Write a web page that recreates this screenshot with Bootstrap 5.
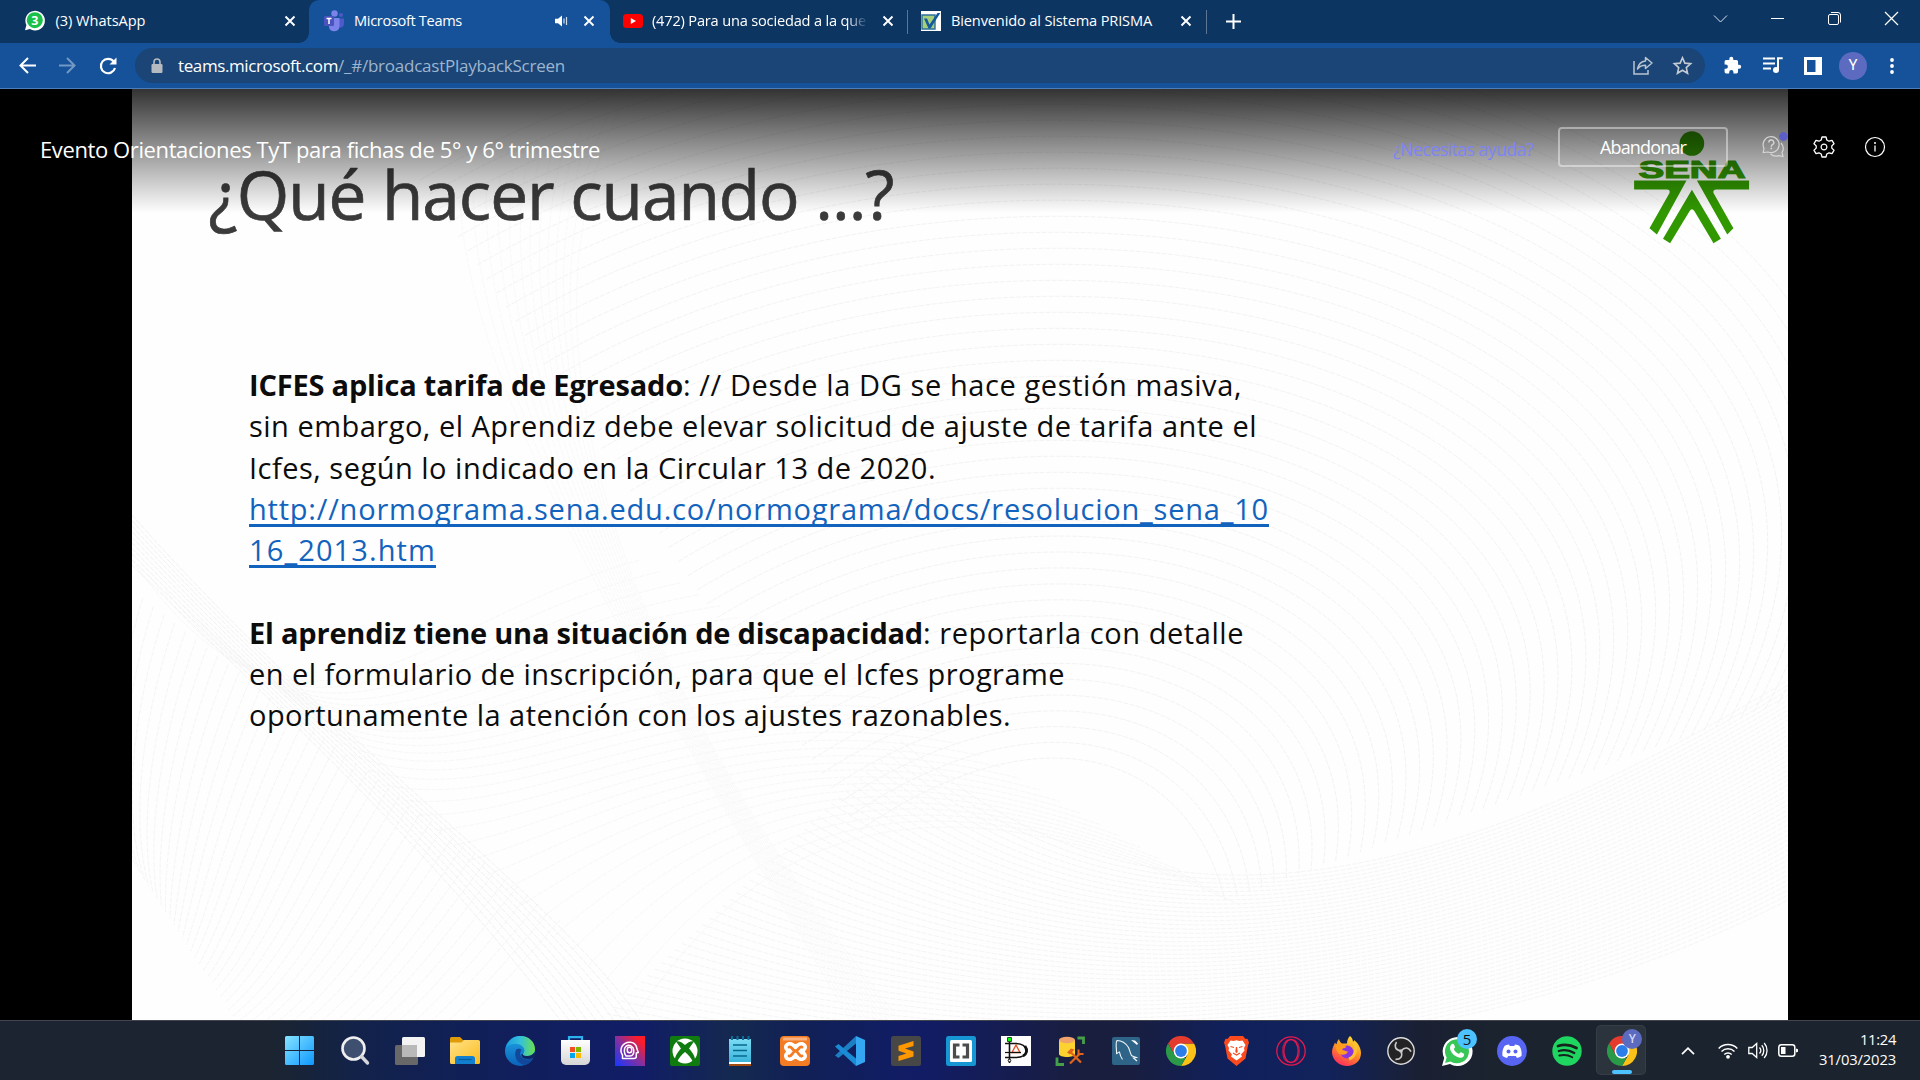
<!DOCTYPE html>
<html lang="es">
<head>
<meta charset="utf-8">
<title>Microsoft Teams</title>
<link href="https://cdn.jsdelivr.net/npm/bootstrap@5.3.0/dist/css/bootstrap.min.css" rel="stylesheet">
<style>
html,body{height:100%;overflow:hidden}
body{width:1920px;height:1080px;background:#000;font-family:"Open Sans","Noto Sans",sans-serif;color:#fff}
svg{display:block;flex:none;overflow:visible}
.fit{white-space:nowrap;display:inline-block}
.tabstrip{height:43px;background:#0c3562;font-size:14.6px;line-height:20px}
.btab{height:43px;padding-left:24px;padding-bottom:2px}
.btab .fit{margin-left:10.5px;margin-top:-2px}
.btab.current{background:#155299;border-radius:10px 10px 0 0;padding-left:15px;width:301px;position:relative}
.btab.current::before,.btab.current::after{content:"";position:absolute;bottom:0;width:10px;height:10px}
.btab.current::before{left:-10px;background:radial-gradient(circle at 0 0,transparent 9.5px,#155299 10px)}
.btab.current::after{right:-10px;background:radial-gradient(circle at 100% 0,transparent 9.5px,#155299 10px)}
.fade-title{width:216px;overflow:hidden;margin-top:-2px;-webkit-mask-image:linear-gradient(90deg,#000 90%,transparent 100%)}
.sep{width:1px;height:24px;background:#5c7796}
.toolbar{height:46px;background:#155299;border-bottom:1px solid #4c7ebb}
.omnibox{width:1570px;height:35px;border-radius:18px;background:#1a4576;font-size:17px;line-height:34px;padding:0 13px 0 14px}
.dim{color:#9fb5cf}
.avatar{width:28px;height:28px;background:#5c6bc0;font-family:Roboto,sans-serif;font-size:15px}
.stage{height:931px;background:#000}
.slide{width:1656px;height:931px;background:#fefefe;color:#0c0c0c}
.slide-art{top:0;left:0}
.slide-body{padding:65px 39.4px 0 76.5px}
.slide-title{font-size:67.5px;line-height:80px;color:#3b3b3b;margin:0;-webkit-text-stroke:.7px #3b3b3b}
.slide-copy{font-size:29px;line-height:41.3px;padding:121px 0 0 40.5px}
.slide-copy a{color:#1263bd;text-decoration:underline 2.5px;text-underline-offset:4px;text-decoration-skip-ink:none}
.copy-line{height:41.3px}
.overlay{top:0;left:0;right:0;height:124px;background:linear-gradient(rgba(0,0,0,.8),rgba(0,0,0,0))}
.overlay-row{padding:37px 34px 0 40px;height:79px}
.event-title{font-size:22px;line-height:42px;padding-top:4px}
.help{color:#7f85f5;font-size:18px}
.leave{width:170px;height:40px;border:2px solid rgba(255,255,255,.42);border-radius:4px;color:#fff;font-size:18px;line-height:24px;font-weight:500}
.taskbar{height:60px;border-top:1px solid #42454e;background:linear-gradient(90deg,#1b2430 0,#1b2430 270px,#12224a 360px,#111f58 470px,#111d66 640px,#14294f 735px,#112056 800px,#111c66 920px,#191e3e 1080px,#191e3f 1130px,#10205c 1230px,#12225a 1330px,#1a2033 1420px,#1b232e 1500px)}
.apps{margin-left:272px}
.app{width:55.1px;height:59px;position:relative}
.app.open::before{content:"";position:absolute;left:2px;top:4px;width:50px;height:50px;border-radius:5px;background:rgba(255,255,255,.075);border:1px solid rgba(255,255,255,.05)}
.app.open::after{content:"";position:absolute;left:17.5px;top:49px;width:20px;height:4px;border-radius:2px;background:#4cc2ff}
.app svg{position:relative}
.bubble{position:absolute;left:28px;top:8px;width:20px;height:20px;border-radius:50%;background:#4cc2ff;color:#111;font-size:15px;line-height:20px;text-align:center}
.bubble.who{background:#5c6bc0;color:#d5d9f5;font-size:12px;font-weight:600}
.clock{font-size:14.8px;line-height:20px;text-align:right;margin-top:-3px}
</style>
<script src="https://cdn.jsdelivr.net/npm/bootstrap@5.3.0/dist/js/bootstrap.bundle.min.js"></script>
</head>
<body class="d-flex flex-column">

<svg width="0" height="0" class="position-absolute">
<defs>
<symbol id="x" viewBox="0 0 12 12"><path d="M1.5 1.5l9 9M10.5 1.5l-9 9" stroke="#fff" stroke-width="1.9" fill="none"/></symbol>
<linearGradient id="gwin" x1="0" y1="0" x2="1" y2="1"><stop offset="0" stop-color="#86e3ff"/><stop offset="1" stop-color="#0d98ff"/></linearGradient>
<linearGradient id="gfold" x1="0" y1="0" x2="1" y2="1"><stop offset="0" stop-color="#ffe28a"/><stop offset="1" stop-color="#fbbc1c"/></linearGradient>
<linearGradient id="gedge" x1="0" y1="0" x2="1" y2="0"><stop offset="0" stop-color="#1b9de2"/><stop offset=".5" stop-color="#35c1d9"/><stop offset="1" stop-color="#6be04b"/></linearGradient>
<linearGradient id="gedge2" x1="0" y1="0" x2="0" y2="1"><stop offset="0" stop-color="#1fa3e6"/><stop offset="1" stop-color="#0b62b8"/></linearGradient>
<linearGradient id="gid" x1="0" y1="1" x2="1" y2="0"><stop offset="0" stop-color="#1438ff"/><stop offset=".5" stop-color="#8a2f9c"/><stop offset=".85" stop-color="#ff1c2a"/></linearGradient>
<linearGradient id="gfire" x1=".8" y1="0" x2=".3" y2="1"><stop offset="0" stop-color="#ffe43a"/><stop offset=".45" stop-color="#ff9a1f"/><stop offset="1" stop-color="#ff2a5f"/></linearGradient>
<linearGradient id="gshadow" x1="0" y1="0" x2="0" y2="1"><stop offset="0" stop-color="#fff"/><stop offset="1" stop-color="#d5d5d5"/></linearGradient>
<linearGradient id="gnote" x1="0" y1="0" x2="0" y2="1"><stop offset="0" stop-color="#7bdcf3"/><stop offset="1" stop-color="#3cb4dc"/></linearGradient>
<symbol id="chrome" viewBox="0 0 30 30"><path d="M28 7.500A15 15 0 0 1 15 30L21.500 18.700L15 7.500Z" fill="#fbc116"/><path d="M2 7.500A15 15 0 0 1 28 7.500H15L8.500 18.700Z" fill="#e33b2e"/><path d="M2 7.500L8.500 18.750L15 22H19.600L15 30A15 15 0 0 1 2 7.500Z" fill="#2a9a48"/><circle cx="15" cy="15" r="7.400" fill="#fff"/><circle cx="15" cy="15" r="5.900" fill="#2b7de9"/></symbol>
</defs>
</svg>

<header class="tabstrip d-flex align-items-center">
  <div class="btab d-flex align-items-center" style="width:309px">
    <svg width="21" height="21" viewBox="0 0 21 21"><path d="M1 20.300l1.400-5.200A9.800 9.800 0 1 1 6 19z" fill="#fff"/><circle cx="10.800" cy="10.200" r="8" fill="#19c14a"/><text x="10.800" y="14.600" font-size="12.500" font-weight="700" fill="#fff" text-anchor="middle">3</text></svg>
    <span class="fit" data-w="90">(3) WhatsApp</span>
    <svg class="ms-auto" width="12" height="12" style="margin-right:13px"><use href="#x"/></svg>
  </div>
  <div class="btab current d-flex align-items-center">
    <svg width="20" height="22" viewBox="0 0 20 22"><circle cx="10.500" cy="3.500" r="3.200" fill="#7b83eb"/><circle cx="17" cy="5" r="2" fill="#5059c9"/><path d="M14 8.500h6v6a3.500 3.500 0 0 1-6 2z" fill="#5059c9"/><path d="M5 8h10.500v8a5.300 5.300 0 0 1-10.500 1z" fill="#7b83eb"/><rect x="0" y="6" width="10" height="10" rx="1" fill="#4b53bc"/><path d="M2.500 8.600h5M5 8.600v5.400" stroke="#fff" stroke-width="1.500"/></svg>
    <span class="fit" data-w="108" style="margin-left:10px">Microsoft Teams</span>
    <svg class="ms-auto" width="13" height="12" viewBox="0 0 13 12"><path d="M0 3.800h3l4-3.300v11L3 8.200H0z" fill="#fff"/><path d="M9 3.500v5M11.500 2v8" stroke="#cfdcec" stroke-width="1.200"/></svg>
    <svg width="12" height="12" style="margin:0 15px"><use href="#x"/></svg>
  </div>
  <div class="btab d-flex align-items-center" style="width:296.5px;padding-left:13px">
    <svg width="20" height="14" viewBox="0 0 20 14"><rect width="20" height="14" rx="3.500" fill="#f00"/><path d="M7.800 4l5.200 3-5.200 3z" fill="#fff"/></svg>
    <span class="fade-title" style="margin-left:9px"><span class="fit m-0" data-w="214">(472) Para una sociedad a la que</span></span>
    <svg class="ms-auto" width="12" height="12" style="margin-right:13px"><use href="#x"/></svg>
  </div>
  <div class="sep"></div>
  <div class="btab d-flex align-items-center" style="width:298px;padding-left:13px">
    <svg width="20" height="20" viewBox="0 0 20 20"><path d="M0 0h20v20H0z" fill="#fff"/><path d="M1 4h13v14H1z" fill="#a6cf7b" stroke="#2f6f9c" stroke-width="1.400"/><path d="M3 7.500h3l2.500 6L16.500 2h2.800L9.500 17.500H7.500z" fill="#145a9c"/></svg>
    <span class="fit" data-w="201">Bienvenido al Sistema PRISMA</span>
    <svg class="ms-auto" width="12" height="12" style="margin-right:13.500px"><use href="#x"/></svg>
  </div>
  <div class="sep"></div>
  <svg width="15" height="15" viewBox="0 0 15 15" style="margin-left:19.500px"><path d="M7.500 0v15M0 7.500h15" stroke="#fff" stroke-width="2"/></svg>
  <div class="ms-auto d-flex align-items-center" style="padding:0 22.500px 6px 0;gap:44px">
    <svg width="13" height="13" viewBox="0 0 13 13"><path d="M0 3.500l6.500 6.500L13 3.500" fill="none" stroke="#dde5ee"/></svg>
    <svg width="13" height="13" viewBox="0 0 13 13"><path d="M0 6.500h13" stroke="#fff"/></svg>
    <svg width="13" height="13" viewBox="0 0 13 13"><g fill="none" stroke="#fff"><rect x=".5" y="2.500" width="10" height="10" rx="1.500"/><path d="M3 .5h7a2.500 2.500 0 0 1 2.500 2.500v7.500"/></g></svg>
    <svg width="13" height="13" viewBox="0 0 13 13"><path d="M0 0l13 13M13 0L0 13" stroke="#fff" stroke-width="1.200"/></svg>
  </div>
</header>

<nav class="toolbar d-flex align-items-center">
  <svg width="17" height="17" viewBox="0 0 17 17" style="margin-left:19px"><path d="M17 8.500H1.500M9 1L1.500 8.500 9 16" fill="none" stroke="#fff" stroke-width="2"/></svg>
  <svg width="17" height="17" viewBox="0 0 17 17" style="margin-left:23px"><path d="M0 8.500h15.500M8 1l7.500 7.500L8 16" fill="none" stroke="#7398c5" stroke-width="2"/></svg>
  <svg width="18" height="18" viewBox="0 0 18 18" style="margin-left:23px"><path d="M14.700 4.500A7.200 7.200 0 1 0 16 11" fill="none" stroke="#fff" stroke-width="2.200"/><path d="M17.500 .5v7h-7z" fill="#fff"/></svg>
  <div class="omnibox d-flex align-items-center" style="margin-left:18px">
    <svg width="16" height="16" viewBox="0 0 16 16"><rect x="2.500" y="6" width="11" height="9" rx="1.200" fill="#b5bac0"/><path d="M5 6V4a3 3 0 0 1 6 0v2" fill="none" stroke="#b5bac0" stroke-width="1.600"/></svg>
    <span class="fit" data-w="160" style="margin-left:13px">teams.microsoft.com</span><span class="fit dim" data-w="227">/_#/broadcastPlaybackScreen</span>
    <svg class="ms-auto" width="20" height="19" viewBox="0 0 20 19"><g fill="none" stroke="#b9c4d0" stroke-width="1.500"><path d="M1 5v13h14v-4"/><path d="M12.500 1.500L19 7l-6.500 5.500V9.300c-3.500 0-6 1-8 3.700.8-4.500 3.500-7.500 8-8z" stroke-linejoin="round"/></g></svg>
    <svg width="19" height="19" viewBox="0 0 20 20" style="margin:0 0 0 20px"><path d="M10 1.800l2.500 5.700 6.100.6-4.600 4.100 1.300 6L10 15l-5.300 3.200 1.300-6L1.400 8.100l6.100-.6z" fill="none" stroke="#c4cbd4" stroke-width="1.700"/></svg>
  </div>
  <svg width="19" height="19" viewBox="0 0 24 24" style="margin-left:18px"><path d="M20.500 11H19V7a2 2 0 0 0-2-2h-4V3.500a2.500 2.500 0 0 0-5 0V5H4a2 2 0 0 0-2 2v3.800h1.500a2.700 2.700 0 0 1 0 5.400H2V20a2 2 0 0 0 2 2h3.800v-1.500a2.700 2.700 0 0 1 5.400 0V22H17a2 2 0 0 0 2-2v-4h1.500a2.500 2.500 0 0 0 0-5z" fill="#fff"/></svg>
  <svg width="20" height="17" viewBox="0 0 20 17" style="margin-left:21px"><path d="M0 1.500h12M0 6.500h12M0 11.500h8" stroke="#fff" stroke-width="2"/><circle cx="13" cy="13" r="3" fill="#fff"/><path d="M15 13V1.300h4.700" fill="none" stroke="#fff" stroke-width="2"/></svg>
  <svg width="18" height="18" viewBox="0 0 18 18" style="margin-left:20.500px"><path d="M0 0h18v18H0zM3 3v12h8.500V3z" fill="#fff" fill-rule="evenodd"/></svg>
  <div class="avatar rounded-circle d-flex align-items-center justify-content-center" style="margin-left:17.500px">Y</div>
  <svg width="4" height="16" viewBox="0 0 4 16" style="margin-left:23px"><g fill="#fff"><circle cx="2" cy="2" r="1.900"/><circle cx="2" cy="8" r="1.900"/><circle cx="2" cy="14" r="1.900"/></g></svg>
</nav>

<main class="stage position-relative d-flex justify-content-center">
  <section class="slide position-relative overflow-hidden">
    <svg id="waves" class="slide-art position-absolute" width="1656" height="931" viewBox="132 89 1656 931" fill="none"></svg>
    <div class="slide-body position-relative">
      <div class="d-flex justify-content-between">
        <h1 class="slide-title"><span class="fit fw-normal" data-w="685">¿Qué hacer cuando ...?</span></h1>
        <svg width="115" height="112" viewBox="1633.500 130.500 115 112" style="margin-top:-23px">
          <g fill="#319800"><circle cx="1691.400" cy="143" r="12.300"/>
          <text x="1638" y="177" font-family="Liberation Sans,sans-serif" font-weight="700" font-size="24" textLength="107" lengthAdjust="spacingAndGlyphs" stroke="#319800" stroke-width="1.200">SENA</text>
          <path d="M1633.600 180H1686L1656.400 234 1649 227.700 1669 192.500Q1670 189 1666.400 189H1633.600z"/>
          <path d="M1748.600 180h-52.200l30.400 54 6.100-6.300L1713 192.500Q1712 189 1716 189h32.600z"/>
          <path d="M1691.400 189.300L1720.400 238.300 1713 242.700 1694 210.700Q1691.400 207 1689 210.700L1669.600 242.700 1662.500 238.300z"/></g>
        </svg>
      </div>
      <div class="slide-copy">
        <div class="copy-line"><b class="fit" data-w="434">ICFES aplica tarifa de Egresado</b><span class="fit" data-w="559">:&nbsp;// Desde la DG se hace gestión masiva,</span></div>
        <div class="copy-line"><span class="fit" data-w="1008">sin embargo, el Aprendiz debe elevar solicitud de ajuste de tarifa ante el</span></div>
        <div class="copy-line"><span class="fit" data-w="687">Icfes, según lo indicado en la Circular 13 de 2020.</span></div>
        <div class="copy-line"><a class="fit" data-w="1020">http://normograma.sena.edu.co/normograma/docs/resolucion_sena_10</a></div>
        <div class="copy-line"><a class="fit" data-w="187">16_2013.htm</a></div>
        <div class="copy-line"></div>
        <div class="copy-line"><b class="fit" data-w="674">El aprendiz tiene una situación de discapacidad</b><span class="fit" data-w="321">:&nbsp;reportarla con detalle</span></div>
        <div class="copy-line"><span class="fit" data-w="816">en el formulario de inscripción, para que el Icfes programe</span></div>
        <div class="copy-line"><span class="fit" data-w="762">oportunamente la atención con los ajustes razonables.</span></div>
      </div>
    </div>
  </section>

  <div class="overlay position-absolute">
    <div class="overlay-row d-flex align-items-center">
      <span class="event-title"><span class="fit" data-w="560">Evento Orientaciones TyT para fichas de 5° y 6° trimestre</span></span>
      <a class="help ms-auto text-decoration-none pt-1"><span class="fit" data-w="140">¿Necesitas ayuda?</span></a>
      <button class="leave btn p-0" style="margin-left:25px"><span class="fit" data-w="86">Abandonar</span></button>
      <svg width="24" height="24" viewBox="0 0 24 24" style="margin-left:34px"><g fill="none" stroke="#d5d5d5" stroke-width="1.200"><path d="M1.200 17.500l.8-4.200A8 8 0 1 1 6 17z"/><path d="M8.500 19a8 8 0 0 0 8.300 1.600l4.200.9-1-4A8 8 0 0 0 19 8"/><path d="M6.800 7.500a2.500 2.500 0 1 1 3.700 2.200c-.9.500-1.200 1-1.200 2" stroke-width="1.400"/></g><circle cx="9.300" cy="13.500" r=".9" fill="#d5d5d5"/><circle cx="21.500" cy="1.500" r="4.400" fill="#5b5fc7"/></svg>
      <svg width="22" height="22" viewBox="-11 -11 22 22" style="margin-left:27px"><path d="M-2-10h4l.8 3 2.200 1.200L8-6.700l2 3.400-2.200 2.200v2.200L10 3.300 8 6.700l-3-.9L2.800 7 2 10h-4l-.8-3L-5 5.800l-3 .9-2-3.400 2.200-2.200v-2.200L-10-3.300l2-3.400 3 .9L-2.800-7z" fill="none" stroke="#fff" stroke-width="1.300" stroke-linejoin="round"/><circle r="2.900" fill="none" stroke="#fff" stroke-width="1.200"/></svg>
      <svg width="22" height="22" viewBox="-11 -11 22 22" style="margin-left:29px"><circle r="9.500" fill="none" stroke="#fff" stroke-width="1.200"/><path d="M0-1.500v6" stroke="#fff" stroke-width="1.300"/><circle cy="-4" r="1" fill="#fff"/></svg>
    </div>
  </div>
</main>

<footer class="taskbar d-flex align-items-center">
  <div class="apps d-flex">
    <div class="app d-flex align-items-center justify-content-center"><svg width="29" height="29" viewBox="0 0 29 29"><path d="M1.500 0H14v14H0V1.500A1.500 1.500 0 0 1 1.500 0zM15 0h12.500A1.500 1.500 0 0 1 29 1.500V14H15zM0 15h14v14H1.500A1.500 1.500 0 0 1 0 27.500zM15 15h14v12.500a1.500 1.500 0 0 1-1.500 1.500H15z" fill="url(#gwin)"/></svg></div>
    <div class="app d-flex align-items-center justify-content-center"><svg width="28" height="29" viewBox="0 0 28 29"><circle cx="12.500" cy="12.500" r="11" fill="#3e4f70" stroke="#f0f0f0" stroke-width="2.600"/><path d="M20.500 20.500l6 6.500" stroke="#d5d7da" stroke-width="3.400" stroke-linecap="round"/></svg></div>
    <div class="app d-flex align-items-center justify-content-center"><svg width="30" height="28" viewBox="0 0 30 28"><rect y="8" width="23" height="20" rx="1.500" fill="#686868"/><rect x="7" width="23" height="20" rx="1.500" fill="#f3f3f3"/><path d="M7 8h15v12H7z" fill="#b9b9b9"/></svg></div>
    <div class="app d-flex align-items-center justify-content-center"><svg width="30" height="27" viewBox="0 0 30 27"><path d="M0 1.500A1.500 1.500 0 0 1 1.500 0H10l3 3h15v7H0z" fill="#e09b0a"/><path d="M0 5.500h11.500L14 3h14.500A1.500 1.500 0 0 1 30 4.500v21a1.500 1.500 0 0 1-1.500 1.500h-27A1.500 1.500 0 0 1 0 25.500z" fill="url(#gfold)"/><path d="M5 27v-5.500A2.500 2.500 0 0 1 7.500 19h15a2.500 2.500 0 0 1 2.500 2.500V27z" fill="#1280cf"/><path d="M8.500 22.500h13" stroke="#075a9c" stroke-width="1.200"/></svg></div>
    <div class="app d-flex align-items-center justify-content-center"><svg width="30" height="30" viewBox="0 0 30 30"><circle cx="15" cy="15" r="15" fill="url(#gedge2)"/><path d="M1 12C3 4 9 0 15.500 0 24 0 30 6 30 13c0 4-3 7-7.500 7-3 0-5-1-4.500-2 1.500-1.500 2-4 .5-6.500C15 6.500 6 6 1 12z" fill="url(#gedge)"/><path d="M11 14c-2.500 6 1 14 9 15 4-1 7-4 8.300-7-3 2-11 2.500-12.800-2.500-.8-2-.2-4 1-5.500-1.500-2-4.500-1.500-5.500 0z" fill="#11489c"/><path d="M18 18c-.8 1.500 2 2.200 4.500 2 3-.1 5.500-1.500 7-4l1 3.500-2 2.500c-4 1.500-10 1.500-11.500-1.500-.8-1.500-1-3 1-2.500z" fill="#112560"/></svg></div>
    <div class="app d-flex align-items-center justify-content-center"><svg width="29" height="29" viewBox="0 0 29 29"><path d="M8 5V1.200h13V5" fill="none" stroke="#2bb1f0" stroke-width="2.200"/><path d="M0 4h29v20a5 5 0 0 1-5 5H5a5 5 0 0 1-5-5z" fill="url(#gshadow)"/><path d="M9 11h5v5H9z" fill="#f25022"/><path d="M15 11h5v5h-5z" fill="#7fba00"/><path d="M9 17h5v5H9z" fill="#00a4ef"/><path d="M15 17h5v5h-5z" fill="#ffb900"/></svg></div>
    <div class="app d-flex align-items-center justify-content-center"><svg width="30" height="30" viewBox="0 0 30 30"><path d="M0 0h30v30H0z" fill="url(#gid)"/><g fill="none" stroke="#fff" stroke-width="1.500" stroke-linejoin="round"><path d="M7.500 22.500v-3.500c-2-3-1.700-6.500-.5-8.700C11 4 21 5 21.800 12.500l1.500 4-2 .5v3.500c0 1.500-1 2-2.500 2H7.500z"/><path d="M11 20c-2-2.500-2.500-7.500 0-9.700a5 5 0 0 1 7.800 3.700c.2 3.500-1 6-3.800 6z"/><path d="M14.500 16.700a2.200 2.200 0 0 1-2.200-2.200v-1a2.200 2.200 0 0 1 4.400 0v1a2.200 2.200 0 0 1-2.200 2.200z"/></g></svg></div>
    <div class="app d-flex align-items-center justify-content-center"><svg width="30" height="30" viewBox="0 0 30 30"><rect width="30" height="30" rx="2" fill="#107c10"/><circle cx="15" cy="15" r="12.500" fill="#fff"/><path d="M6 5.500c3-.8 6 1 9 3.500 3-2.500 6-4.300 9-3.500l-5 7c3 3.500 6.500 8 6 12l-2 1.800C21.500 22 18 18.500 15 16c-3 2.500-6.500 6-8 10.300l-2-1.800c-.5-4 3-8.500 6-12z" fill="#107c10"/></svg></div>
    <div class="app d-flex align-items-center justify-content-center"><svg width="22" height="30" viewBox="0 0 22 30"><path d="M0 3h22v23H0z" fill="url(#gnote)"/><path d="M0 26h22v2H0z" fill="#fff"/><path d="M0 28h22v2H0z" fill="#a64b10"/><path d="M3 0v4M8.500 0v4M14 0v4M19.500 0v4" stroke="#0a6e96" stroke-width="2"/><path d="M4 9h14M4 14.500h14M4 20h14" stroke="#07688f" stroke-width="1.700"/></svg></div>
    <div class="app d-flex align-items-center justify-content-center"><svg width="30" height="30" viewBox="0 0 30 30"><rect width="30" height="30" rx="4" fill="#f37c24"/><path d="M3 1.500h24v3H3z" fill="#f9b27f"/><path d="M10 6c3 0 4 2 5.500 2S18 6 21 6s6 2 6 5-2 3.500-2 4.500 2 1.500 2 4.500-3 5-6 5-3.500-2-5.500-2-2.500 2-5.500 2-6-2-6-5 2-3.500 2-4.500-2-1.500-2-4.500 3-5 6-5z" fill="#fff"/><path d="M9 11c3-1 3 3.500 6.500 4M9 20c3 1 3-4 6.500-5 3.500-.5 3.500-5 6.500-4M22 20c-3 1-3-4-6.500-5" fill="none" stroke="#f37c24" stroke-width="2.800" stroke-linecap="round"/></svg></div>
    <div class="app d-flex align-items-center justify-content-center"><svg width="30" height="30" viewBox="0 0 30 30"><path d="M21 7.500L3.500 22 0 19.500 21 0z" fill="#1c7fc4"/><path d="M21 22.500L3.500 8 0 10.500 21 30z" fill="#1b8bd6"/><path d="M21 0l9 4v22l-9 4z" fill="#34a6f2"/></svg></div>
    <div class="app d-flex align-items-center justify-content-center"><svg width="30" height="30" viewBox="0 0 30 30"><rect width="30" height="30" rx="2.500" fill="#474747"/><path d="M22.500 5v5L14 12.500l8.500 3v5L7.500 25v-5l8-2.500-8-2.800v-5z" fill="#ff9800"/></svg></div>
    <div class="app d-flex align-items-center justify-content-center"><svg width="30" height="30" viewBox="0 0 30 30"><rect width="30" height="30" rx="2.500" fill="#1796d4"/><rect x="4" y="4" width="22" height="22" rx="1.500" fill="#fff"/><path d="M13.500 9H8.500v12h5M16.500 9h5v12h-5" fill="none" stroke="#4c4c4c" stroke-width="3.200"/></svg></div>
    <div class="app d-flex align-items-center justify-content-center"><svg width="30" height="30" viewBox="0 0 30 30"><path d="M0 0h30v30H0z" fill="#fff"/><path d="M8.500 3v24M4 7.500h10c8 0 11 3 11 7.500s-4 6.500-11 6.500H4" fill="none" stroke="#111" stroke-width="1.600"/><path d="M24 10c3 4 2 8-2 10" fill="none" stroke="#111" stroke-width="2.600"/><path d="M15 9l4 7.500h-8z" fill="none" stroke="#e4572b" stroke-width="1.400"/><path d="M4 16.500h16" stroke="#111" stroke-width="1.200"/><circle cx="8.500" cy="24.500" r="1.300" fill="#fff" stroke="#111"/><path d="M6.500 1.500h4v4h-4z" fill="#0f0" stroke="#175b17"/></svg></div>
    <div class="app d-flex align-items-center justify-content-center"><svg width="29" height="30" viewBox="0 0 29 30"><path d="M3 4v14c0 4 16 4 16 0V4z" fill="#fbd22f"/><ellipse cx="11" cy="4" rx="8" ry="3.300" fill="#f0a36b"/><path d="M21.500 2h6v6M1 21.500v7h7" fill="none" stroke="#46a049" stroke-width="2.800"/><path d="M14.500 16l10.500 10.500M24 17.500L14 27.500" stroke="#e2641c" stroke-width="2.200"/><path d="M11 16.500l4-4 3.500 1-4.500 5z" fill="#e2641c"/><path d="M22.500 13.500v4.500h5" fill="none" stroke="#e2641c" stroke-width="2"/></svg></div>
    <div class="app d-flex align-items-center justify-content-center"><svg width="28" height="28" viewBox="0 0 28 28"><rect width="28" height="28" rx="2" fill="#2f6489"/><path d="M4.500 17C5 13 3 6 5 3.500c5 0 9 3 11.500 7 1.500 3.500 2 6.500 3 8 1.500 1 4 1.500 5 2l-3 .5 3.500 3M4.500 17c1-1 1.500-2 3-2 .5 3 1 5 3 7.500" fill="none" stroke="#f2f6f9" stroke-width="1.100"/><path d="M19 3l4 .5 3 3-1 1.500-3-2.500z" fill="#fff"/></svg></div>
    <div class="app d-flex align-items-center justify-content-center"><svg width="30" height="30"><use href="#chrome"/></svg></div>
    <div class="app d-flex align-items-center justify-content-center"><svg width="25" height="30" viewBox="0 0 25 30"><path d="M6 0h13l2.500 3 2-.3L25 6.500l-1 3-2.500 13L12.500 30l-9-7.500L1 9.500l-1-3L1.500 2.700l2 .3z" fill="#fb4b1e"/><path d="M6.500 4.500l3 .5 3-.7 3 .7 3-.5 3 4.500-1.500 3 .5 2.500-3.500 4 1 2-5.500 4-5.500-4 1-2-3.500-4 .5-2.500L3.500 9z" fill="#fff"/><path d="M6.500 10.500l3.500 1M18.500 10.500l-3.500 1M12.500 11l-.6 4.500.6.800.6-.8zM9 17l3.500 2 3.500-2" fill="none" stroke="#fb4b1e" stroke-width="1.200"/></svg></div>
    <div class="app d-flex align-items-center justify-content-center"><svg width="30" height="30" viewBox="0 0 30 30"><g fill="none" stroke="#e6194f" stroke-width="1.300"><circle cx="15" cy="15" r="14.200"/><ellipse cx="15" cy="15" rx="7.200" ry="11.500"/><path d="M18 3.800c7 3 7 19.400 0 22.400M12 3.800c-7 3-7 19.400 0 22.400" opacity=".7"/></g></svg></div>
    <div class="app d-flex align-items-center justify-content-center"><svg width="29" height="30" viewBox="0 0 29 30"><path d="M18 0c2 1.500 3 4 3 6 1-.5 1-1 1-2 4 3 7 8 7 13 0 8-6.500 13-14 13S0 24 0 16c0-4 2-7 3-9.500.5 1 1 1.500 1.500 2C5 6 5.500 5 7 3c.5 2 1.500 3.500 3 4.500h5c0-3 1-5.500 3-7.500z" fill="url(#gfire)"/><circle cx="15" cy="16" r="6.500" fill="#8a35dd"/><path d="M4 8.500c4-1 8 0 10.500 2.500-1.500 1.200-4 1-4.500 3 3 0 4 2 6 1.500-1.500 4-6 3.500-8.500 2.500C5 16.500 3 12 4 8.500z" fill="#ff9c20"/><path d="M21 6c4 5 4 14-4 17" fill="none" stroke="#ffc033" stroke-width="3"/></svg></div>
    <div class="app d-flex align-items-center justify-content-center"><svg width="28" height="28" viewBox="-14 -14 28 28"><circle r="13.200" fill="#232326" stroke="#dcdcdc" stroke-width="1.400"/><g fill="none" stroke="#c9c9c9" stroke-width="1.600"><path d="M0 0C-6-1-7-5-4.500-9"/><path d="M0 0C-6-1-7-5-4.500-9" transform="rotate(120)"/><path d="M0 0C-6-1-7-5-4.500-9" transform="rotate(240)"/></g><circle r="1.800" fill="#c9c9c9"/></svg></div>
    <div class="app d-flex align-items-center justify-content-center"><svg width="30" height="30" viewBox="0 0 30 30"><path d="M0 30l2.200-8A15 14.500 0 1 1 8 28z" fill="#fff"/><path d="M3 27l1.700-5.500a12 12 0 1 1 3.800 3.900z" fill="#38c655"/><path d="M10 8c1.500-.7 2 0 3 3 .2 1-1.500 1.500-1 2.500 1 2 2.500 3.500 4.500 4.300 1 .5 1.500-2 2.500-1.600l3 1.500c.7 3-2 4.300-4 4-5-.8-9.500-5-10-9.500 0-1.500.7-3.500 2-4.200z" fill="#fff"/></svg><span class="bubble">5</span></div>
    <div class="app d-flex align-items-center justify-content-center"><svg width="30" height="30" viewBox="0 0 30 30"><circle cx="15" cy="15" r="15" fill="#5865f2"/><path d="M12 8.500c-2 .3-3.500.8-4.500 1.500C5.500 13 5 17 5.500 20c1.500 1 3 1.700 4.500 2l1.300-2h7.400l1.300 2c1.500-.3 3-1 4.500-2 .5-3 0-7-2-10-1-.7-2.500-1.200-4.500-1.500l-.8 1.400h-4.400z" fill="#fff"/><circle cx="11.500" cy="15.500" r="2" fill="#5865f2"/><circle cx="18.500" cy="15.500" r="2" fill="#5865f2"/></svg></div>
    <div class="app d-flex align-items-center justify-content-center"><svg width="30" height="30" viewBox="0 0 30 30"><circle cx="15" cy="15" r="14.700" fill="#1fd760"/><g fill="none" stroke="#15231c" stroke-linecap="round"><path d="M6 10c6-1.800 13-1 18.500 2" stroke-width="2.800"/><path d="M6.800 15c5-1.500 11-.8 15.500 2" stroke-width="2.300"/><path d="M7.300 19.500c4.500-1 9-.6 13 1.800" stroke-width="1.900"/></g></svg></div>
    <div class="app open d-flex align-items-center justify-content-center"><svg width="30" height="30"><use href="#chrome"/></svg><span class="bubble who">Y</span></div>
  </div>
  <div class="ms-auto d-flex align-items-center" style="padding-right:24px">
    <svg width="14" height="8" viewBox="0 0 14 8"><path d="M1 7.200l6-6 6 6" fill="none" stroke="#fff" stroke-width="1.700"/></svg>
    <svg width="20" height="16" viewBox="0 0 20 16" style="margin-left:23px"><g fill="none" stroke="#fff" stroke-width="1.500"><path d="M.7 5.500a13 13 0 0 1 18.600 0M3.500 8.500a9.200 9.200 0 0 1 13 0M6.300 11.500a5.200 5.200 0 0 1 7.400 0"/></g><circle cx="10" cy="13.800" r="1.900" fill="#fff"/></svg>
    <svg width="20" height="17" viewBox="0 0 20 17" style="margin-left:10px"><g fill="none" stroke="#fff" stroke-width="1.300"><path d="M.8 5.500h3.400l4.500-4v14l-4.500-4H.8z"/><path d="M11.500 5.500a4.500 4.500 0 0 1 0 6M13.800 3.200a8 8 0 0 1 0 10.600M16.200 1a11.300 11.300 0 0 1 0 15"/></g></svg>
    <svg width="20" height="13" viewBox="0 0 20 13" style="margin-left:10px"><rect x=".8" y=".8" width="16" height="11.400" rx="2.500" fill="none" stroke="#fff" stroke-width="1.500"/><path d="M3 3h4.500v7H3zM18 4.500l2 .8v2.400l-2 .8z" fill="#fff"/></svg>
    <div class="clock" style="margin-left:21px"><div><span class="fit" data-w="36">11:24</span></div><div><span class="fit" data-w="77">31/03/2023</span></div></div>
  </div>
</footer>

<script>
// Track each label to its set width through letter spacing
document.querySelectorAll('[data-w]').forEach(function (el) {
  var natural = el.getBoundingClientRect().width;
  el.style.letterSpacing = ((+el.dataset.w - natural) / el.textContent.length).toFixed(4) + 'px';
});
// Wave line families: cubic curves interpolated between a first and a last curve
var families = [
  [[860,830,1050,700,1190,760,1225,900],[420,180,1050,-180,2120,120,1790,700],46,'#f3f3f3'],
  [[132,560,300,800,420,620,640,560],[640,1010,760,830,930,760,1240,905],30,'#f7f7f7'],
  [[132,590,100,700,100,800,132,860],[560,920,480,1010,420,1080,300,1120],40,'#f5f5f5'],
  [[132,515,330,740,560,900,640,1020],[132,565,310,740,440,860,560,1020],9,'#f1f1f1'],
  [[900,740,1080,900,1330,960,1788,680],[600,1020,900,1080,1400,1100,1788,900],44,'#f5f5f5'],
  [[460,200,470,420,700,760,850,1020],[620,110,500,350,640,700,900,1020],12,'#f9f9f9']
];
var out = '';
families.forEach(function (f) {
  for (var i = 0; i <= f[2]; i++) {
    var t = i / f[2], p = f[0].map(function (v, k) { return (v + (f[1][k] - v) * t).toFixed(1); });
    out += '<path d="M' + p[0] + ' ' + p[1] + 'C' + p.slice(2).join(' ') + '" stroke="' + f[3] + '" stroke-dasharray="5 1.500"/>';
  }
});
document.getElementById('waves').innerHTML = out;
</script>
</body>
</html>
